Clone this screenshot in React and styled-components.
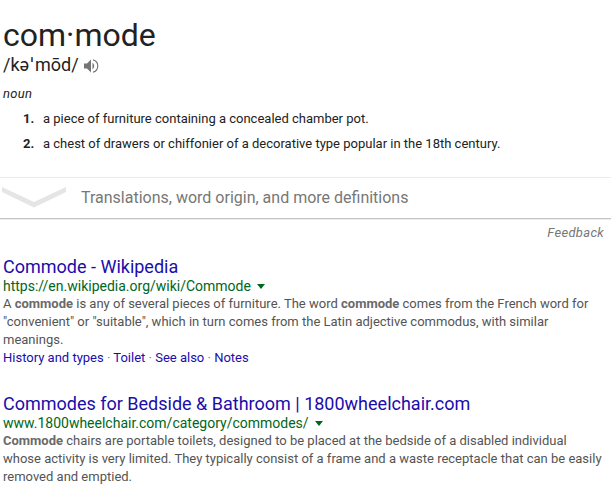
import React from "react";
import styled, { createGlobalStyle } from "styled-components";

const GlobalStyle = createGlobalStyle`
  * { box-sizing: border-box; }
  body { margin: 0; background: #fff; color: #222; font-family: Roboto, "Noto Sans", sans-serif; }
`;

const Page = styled.main`
  width: 611px;
  height: 498px;
  overflow: hidden;
  white-space: nowrap;
  display: flex;
  flex-direction: column;
`;

const Dictionary = styled.section`
  height: 177px;
  padding: 15px 3px 0;
`;

const Headword = styled.h1`
  margin: 0;
  font-size: 32px;
  font-weight: 400;
  line-height: 40px;
`;

const Pronunciation = styled.div`
  display: flex;
  align-items: center;
  gap: 4px;
  height: 20px;
  font-size: 18px;
  line-height: 20px;
`;

const Phonetic = styled.span`
  height: 20px;
`;

const Stress = styled.span`
  margin: 0 1.5px 0 1.5px;
`;

const Speaker = styled.svg`
  display: block;
  width: 16px;
  height: 16px;
  margin-top: 1px;
  fill: #757575;
`;

const WordClass = styled.div`
  margin-top: 10px;
  font-size: 13px;
  font-style: italic;
  letter-spacing: 0.3px;
  line-height: 18px;
`;

const Definitions = styled.ol`
  margin: 3px 0 0;
  padding: 0;
  list-style: none;
`;

const Definition = styled.li`
  display: grid;
  grid-template-columns: 20px 1fr;
  padding-left: 20px;
  font-size: 13px;
  line-height: 25px;
`;

const Num = styled.span`
  font-weight: 700;
`;

const MoreBar = styled.div`
  display: flex;
  align-items: center;
  height: 42px;
  padding-bottom: 2px;
  border-top: 1px solid #ebebeb;
  border-bottom: 1px solid #c5c5c5;
  box-shadow: 0 1px 0 #ececec;
  color: #777;
  font-size: 16px;
`;

const Chevron = styled.svg`
  display: block;
  width: 66px;
  height: 24px;
  margin-right: 15px;
  fill: #e5e5e5;
`;

const Feedback = styled.a`
  align-self: flex-end;
  margin: 5px 7px 0 0;
  color: #777;
  font-size: 13px;
  font-style: italic;
  letter-spacing: 0.3px;
  line-height: 18px;
`;

const Result = styled.article`
  padding-left: 3px;
  margin-top: ${(p) => p.$gap}px;
`;

const Title = styled.h3`
  margin: 0;
  color: #1a0dab;
  font-size: 18px;
  font-weight: 400;
  line-height: 22px;
`;

const Url = styled.cite`
  display: flex;
  align-items: center;
  gap: 6px;
  color: #006621;
  font-size: 14px;
  font-style: normal;
  line-height: 16px;
`;

const Caret = styled.span`
  border: 4px solid transparent;
  border-top: 5px solid #006621;
  border-bottom: 0;
`;

const Snippet = styled.p`
  margin: 1px 0 0;
  color: #545454;
  font-size: 13px;
  line-height: 18px;

  b { color: #6a6a6a; }
`;

const Links = styled.nav`
  color: #808080;
  font-size: 13px;
  line-height: 18px;
`;

const Link = styled.a`
  color: #1a0dab;
`;

export default function App() {
  return (
    <Page>
      <GlobalStyle />
      <Dictionary>
        <Headword>com·mode</Headword>
        <Pronunciation>
          <Phonetic>/kə<Stress>ˈ</Stress>mōd/</Phonetic>
          <Speaker viewBox="0 0 16 16">
            <path d="M1 5.500h3L8 1.500v13L4 10.500H1zM9.500 4.500q3.500 3.500 0 7z" />
            <path d="M10 1.200a7 7 0 0 1 0 13.600v-1.300a5.700 5.700 0 0 0 0-11z" />
          </Speaker>
        </Pronunciation>
        <WordClass>noun</WordClass>
        <Definitions>
          <Definition><Num>1.</Num><span>a piece of furniture containing a concealed chamber pot.</span></Definition>
          <Definition><Num>2.</Num><span>a chest of drawers or chiffonier of a decorative type popular in the 18th century.</span></Definition>
        </Definitions>
      </Dictionary>
      <MoreBar>
        <Chevron viewBox="0 0 66 24"><path d="M2 2l32 15L66 2v5L34 22.500L2 7z" /></Chevron>
        <span>Translations, word origin, and more definitions</span>
      </MoreBar>
      <Feedback>Feedback</Feedback>
      <Result $gap={14}>
        <Title>Commode - Wikipedia</Title>
        <Url>https://en.wikipedia.org/wiki/Commode <Caret /></Url>
        <Snippet>
          A <b>commode</b> is any of several pieces of furniture. The word <b>commode</b> comes from the French word for<br />
          "convenient" or "suitable", which in turn comes from the Latin adjective commodus, with similar<br />
          meanings.
        </Snippet>
        <Links><Link>History and types</Link> · <Link>Toilet</Link> · <Link>See also</Link> · <Link>Notes</Link></Links>
      </Result>
      <Result $gap={26}>
        <Title>Commodes for Bedside &amp; Bathroom | 1800wheelchair.com</Title>
        <Url>www.1800wheelchair.com/category/commodes/ <Caret /></Url>
        <Snippet>
          <b>Commode</b> chairs are portable toilets, designed to be placed at the bedside of a disabled individual<br />
          whose activity is very limited. They typically consist of a frame and a waste receptacle that can be easily<br />
          removed and emptied.
        </Snippet>
      </Result>
    </Page>
  );
}
